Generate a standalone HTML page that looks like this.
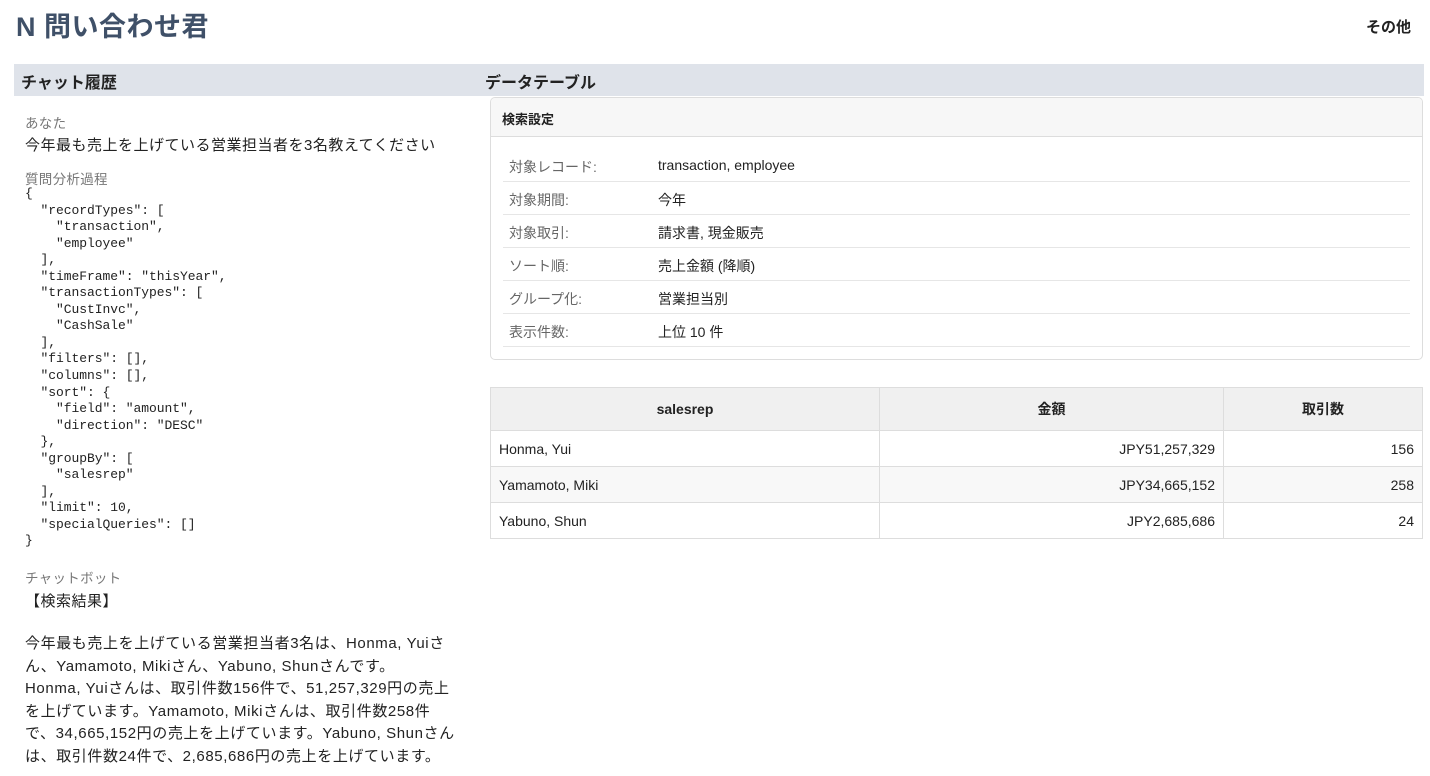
<!DOCTYPE html>
<html><head><meta charset="utf-8"><style>
*{box-sizing:border-box;margin:0;padding:0}
body{width:1430px;height:776px;overflow:hidden;background:#fff;font-family:"Liberation Sans","Noto Sans CJK JP",sans-serif;color:#222;position:relative}
.abs{position:absolute;white-space:nowrap}
h1{position:absolute;left:16px;top:5px;font-size:27px;letter-spacing:0.5px;font-weight:bold;color:#3f5068}
.other{position:absolute;left:1366px;top:16px;font-size:15px;font-weight:bold}
.bar{position:absolute;top:64px;height:32px;left:14px;width:1410px;background:#dfe3ea}
.bar span{position:absolute;top:5px;font-size:16px;font-weight:bold;color:#222}
.lbl{color:#777;font-size:13.5px;letter-spacing:0.3px}
.txt{font-size:15px;letter-spacing:0.5px}
pre{position:absolute;left:25px;top:186px;font-family:"Liberation Mono",monospace;font-size:13px;letter-spacing:-0.05px;line-height:16.55px;color:#222}
.card{position:absolute;left:490px;top:97px;width:933px;height:263px;border:1px solid #ddd;border-radius:5px;overflow:hidden}
.card .hd{height:39px;background:#f7f7f7;border-bottom:1px solid #ddd;font-size:13px;font-weight:bold;padding:11px 0 0 11px}
.row{position:absolute;left:12px;width:907px;height:33px;border-bottom:1px solid #e6e6e6;font-size:14px}
.row .k{position:absolute;left:6px;top:8px;color:#666}
.row .v{position:absolute;left:155px;top:8px;color:#222}
table{position:absolute;left:490px;top:387px;width:933px;border-collapse:collapse;font-size:14px}
td,th{border:1px solid #ddd;padding:0 8px}
th{height:43px;background:#f0f0f0;font-weight:bold}
td{height:36px}
tr.alt td{background:#f8f8f8}
.r{text-align:right}
.chat{position:absolute;left:25px;top:633px;font-size:15px;line-height:22.6px;white-space:nowrap;letter-spacing:0.6px}
</style></head><body>
<h1>N 問い合わせ君</h1>
<div class="other">その他</div>
<div class="bar"><span style="left:7px">チャット履歴</span><span style="left:471px">データテーブル</span></div>
<div class="abs lbl" style="left:25px;top:112px">あなた</div>
<div class="abs txt" style="left:25px;top:134px">今年最も売上を上げている営業担当者を3名教えてください</div>
<div class="abs lbl" style="left:25px;top:168px">質問分析過程</div>
<pre>{
  "recordTypes": [
    "transaction",
    "employee"
  ],
  "timeFrame": "thisYear",
  "transactionTypes": [
    "CustInvc",
    "CashSale"
  ],
  "filters": [],
  "columns": [],
  "sort": {
    "field": "amount",
    "direction": "DESC"
  },
  "groupBy": [
    "salesrep"
  ],
  "limit": 10,
  "specialQueries": []
}</pre>
<div class="abs lbl" style="left:25px;top:567px">チャットボット</div>
<div class="abs txt" style="left:25px;top:590px">【検索結果】</div>
<div class="chat">今年最も売上を上げている営業担当者3名は、Honma, Yuiさ<br>ん、Yamamoto, Mikiさん、Yabuno, Shunさんです。<br>Honma, Yuiさんは、取引件数156件で、51,257,329円の売上<br>を上げています。Yamamoto, Mikiさんは、取引件数258件<br>で、34,665,152円の売上を上げています。Yabuno, Shunさん<br>は、取引件数24件で、2,685,686円の売上を上げています。</div>
<div class="card"><div class="hd">検索設定</div>
<div class="row" style="top:51px"><span class="k">対象レコード:</span><span class="v">transaction, employee</span></div>
<div class="row" style="top:84px"><span class="k">対象期間:</span><span class="v">今年</span></div>
<div class="row" style="top:117px"><span class="k">対象取引:</span><span class="v">請求書, 現金販売</span></div>
<div class="row" style="top:150px"><span class="k">ソート順:</span><span class="v">売上金額 (降順)</span></div>
<div class="row" style="top:183px"><span class="k">グループ化:</span><span class="v">営業担当別</span></div>
<div class="row" style="top:216px"><span class="k">表示件数:</span><span class="v">上位 10 件</span></div>
</div>
<table>
<tr><th style="width:389px">salesrep</th><th style="width:344px">金額</th><th>取引数</th></tr>
<tr><td>Honma, Yui</td><td class="r">JPY51,257,329</td><td class="r">156</td></tr>
<tr class="alt"><td>Yamamoto, Miki</td><td class="r">JPY34,665,152</td><td class="r">258</td></tr>
<tr><td>Yabuno, Shun</td><td class="r">JPY2,685,686</td><td class="r">24</td></tr>
</table>
</body></html>
